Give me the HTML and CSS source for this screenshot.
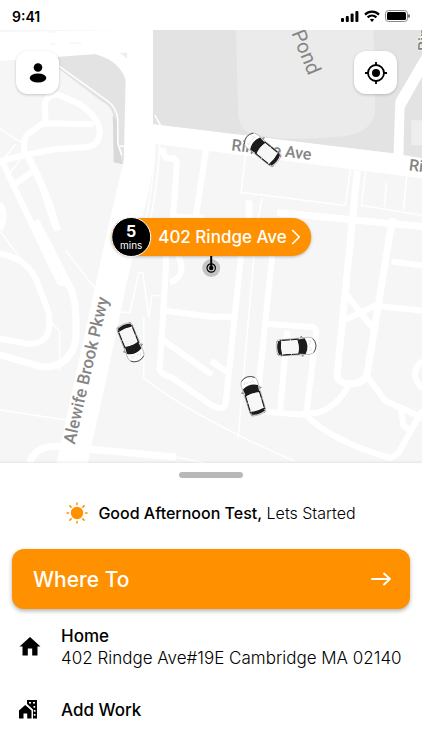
FILE: index.html
```html
<!DOCTYPE html>
<html lang="en">
<head>
<meta charset="UTF-8">
<meta name="viewport" content="width=device-width, initial-scale=1.0">
<title>Book a ride</title>
<link rel="stylesheet" href="styles.css">
</head>
<body>

<div class="app">
  <header class="status-bar">
    <span class="time">9:41</span>
    <div class="status-icons">
      <svg width="18" height="12" viewBox="0 0 18 12">
        <rect x="0" y="8" width="3" height="4" rx="1"/>
        <rect x="4.8" y="6" width="3" height="6" rx="1"/>
        <rect x="9.6" y="3.5" width="3" height="8.500" rx="1"/>
        <rect x="14.400" y="1" width="3" height="11" rx="1"/>
      </svg>
      <svg width="16" height="12" viewBox="0 0 16 12" fill="none" stroke="#000" stroke-width="2.200">
        <path d="M1 4.600C5 .6 11 .6 15 4.600M3.600 7.400c2.600-2.500 6.200-2.500 8.800 0"/>
        <path d="M5.800 9.600c1.300-1.200 3.100-1.200 4.400 0L8 12z" fill="#000" stroke="none"/>
      </svg>
      <svg width="25" height="12" viewBox="0 0 25 12">
        <rect x=".5" y=".5" width="22" height="11" rx="3" fill="none" stroke="#888"/>
        <rect x="2" y="2" width="19" height="8" rx="1.500"/>
        <path d="M23.500 4c1.500.4 1.500 3.600 0 4z"/>
      </svg>
    </div>
  </header>

  <main class="map">
    <svg class="map-canvas" viewBox="0 30 422 432" preserveAspectRatio="xMidYMid slice" role="img" aria-label="Map of nearby cars">
      <defs>
        <g id="car">
          <path d="M-8.500-13Q-8-19.500 0-19.800Q8-19.500 8.500-13L8 17Q7 19.800 0 19.800Q-7 19.800-8 17z" fill="#fff" stroke="#999" stroke-width=".6"/>
          <path d="M-7-17Q-4-19.600 0-19.800Q4-19.600 7-17" fill="none" stroke="#444" stroke-width=".8"/>
          <path d="M-8.300-7l-2 1.300 2 .7M8.300-7l2 1.300-2 .7" fill="none" stroke="#777" stroke-width=".8"/>
          <path d="M-3-14l2 .5M3-14l-2 .5M-5-12.500l1-3M5-12.500l-1-3" stroke="#ccc" stroke-width=".6"/>
          <path d="M-7.800-9Q0-13.500 7.800-9L7-1.500Q0-3.500-7-1.500z" fill="#1c1c1c"/>
          <path d="M-7.300-3v19M7.300-3v19" stroke="#222" stroke-width="1.300" stroke-dasharray="8 .6"/>
          <path d="M-6.500 14.500Q0 16 6.500 14.500L7 17.500Q0 20.500-7 17.500z" fill="#1c1c1c"/>
          <path d="M-6.500-1.500Q0-3.500 6.500-1.500V13.800Q0 15.800-6.500 13.800z" fill="#f7f7f7"/>
          <path d="M-7.500 18.300l2 1M7.500 18.300l-2 1" stroke="#c66" stroke-width=".8"/>
        </g>
      </defs>
      <rect y="30" width="422" height="432" fill="#f6f6f6"/>

      <!-- parks and pond -->
      <path d="M55 57L96 54Q126 63 127 84V164L114 162V116Q111 105 103 102L58 68z" fill="#e3e3e3"/>
      <path d="M113 115Q117 118 118 130V146L123 164 114 162z" fill="#d9d9d9"/>
      <path d="M153 30H422V160L396 154 153 124z" fill="#e3e3e3"/>
      <path d="M236 30H373L375 110Q372 130 350 135Q315 140 280 138L252 134Q240 130 238 115z" fill="#ebebeb"/>
      <path d="M411 120h11v25h-11z" fill="#eee"/>

      <!-- footpaths -->
      <g fill="none" stroke="#fff" stroke-width="1.500">
        <path d="M58 65L108 101Q116 107 118 118V143l4 12M120 146h7"/>
        <path d="M0 128l18 12 5 2M0 164l16-20M25 154L6 178M33 158q10 42 22 72"/>
        <path d="M155 115l6 11M155 144q-2 50-12 86M160 144q-3 50-12 86"/>
        <path d="M246 150l-5 42 104 13 6-43M366 166l-5 39 61 10M407 170l-4 40M386 182l-2 25"/>
        <path d="M262 197l-6 33M254 255l-16 182M242 255l-5 60M66 250l31 40M0 230l36 48M48 318l12 12v40"/>
        <path d="M128 256l-10 55 12 1 9-40h4l6 45 3-22h9M144 317v60q25 20 67 43M118 320L88 440"/>
        <path d="M211 420q45 24 83 40M0 409l80 12M123 450l52 6 30 6"/>
      </g>

      <!-- side streets -->
      <g fill="none" stroke="#fff" stroke-width="6" stroke-linejoin="round">
        <path d="M46 122L45 104Q48 93 60 95L80 104Q100 118 100 132Q99 146 85 147L55 149 24 155 0 161"/>
        <path d="M44 123l50 1M45 122L28 134q-5 5-3 18M15 184l18-13M2 160L60 282Q68 282 69 287"/>
        <path d="M27 154Q47 190 58 230" stroke-width="7"/>
        <path d="M36 220L70 286Q78 300 76 340 69 368 42 366L0 354" stroke-width="7"/>
        <path d="M0 253Q28 258 37 280L49 312Q54 344 29 343L0 338M0 203q8 12 0 26"/>
        <path d="M163 148q-1 12 11 10l3 4-4 56M206 150l-10 65M174 216l30 2M166 218v50l-6 98M166 310l45 6M164 340l48 34M178 255q10 20-8 27"/>
        <path d="M159 366q1 8 12 10l40 28q15 8 15-5l15-144M211 316h22M211 360l17 12"/>
        <path d="M249 200v18M277 212l145 14M357 170l-13 132-7 70q-2 10 13 11 14 0 17-11L390 230l3-12" stroke-width="7"/>
        <path d="M272 255l-16 155 50 4 10-82q1-6-7-6l-44-3M287 330l-7 80"/>
        <path d="M391 261l31 4M342 320q20-8 32-15l48 5M347 295l25 32M367 376l18 24 37 17M422 360q-15 12 0 28"/>
        <path d="M348 385q-12 22-32 27h-12q24 27 86 45l8-5 24-43M400 405l3 20 10 6"/>
        <path d="M30 462q6-20 36-16l110 10" stroke-width="7"/>
      </g>

      <!-- main roads -->
      <g fill="#fff">
        <path d="M0 32L127 30V84Q122 61 95 54L0 61z"/>
        <path d="M127 30H153V128Q157 150 149 190L127 282 108 372 88 462H57L108 228 124 160z"/>
        <path d="M153 124L211 131 393 153 422 158V178L211 151 152 143z"/>
        <path d="M422 54L395 100 393 156H403L404 108 422 76z"/>
      </g>
      <path d="M121 53h6v5zM50 32h6M50 44h6M70 43h12" fill="#eee" stroke="#eee" stroke-width=".8"/>

      <g class="street">
        <text transform="translate(231 150) rotate(7)">Rindge Ave</text>
        <text transform="translate(408 170) rotate(7)">Rindge Ave</text>
        <text class="parkway" transform="translate(75 444) rotate(-77)">Alewife Brook Pkwy</text>
        <text class="water" transform="translate(291 33) rotate(68)">Pond</text>
        <text transform="translate(429 51) rotate(-90)">Rin</text>
      </g>

      <use href="#car" transform="translate(262 149) rotate(-51)"/>
      <use href="#car" transform="translate(131 342) rotate(158)"/>
      <use href="#car" transform="translate(296 346) rotate(86)"/>
      <use href="#car" transform="translate(253 395) rotate(-17)"/>
    </svg>

    <nav class="map-controls">
      <button type="button" class="icon-button" aria-label="Profile">
        <svg width="18" height="20" viewBox="0 0 18 20"><circle cx="9" cy="4.500" r="4.300"/><ellipse cx="9" cy="15" rx="8.300" ry="4.500"/></svg>
      </button>
      <button type="button" class="icon-button" aria-label="My location">
        <svg width="24" height="24" viewBox="0 0 24 24" fill="none" stroke="#000" stroke-width="1.800">
          <circle cx="12" cy="12" r="8"/><circle cx="12" cy="12" r="4" fill="#000" stroke="none"/>
          <path d="M12 1v3M12 20v3M1 12h3M20 12h3"/>
        </svg>
      </button>
    </nav>

    <div class="pickup">
      <button type="button" class="pickup-label">
        <span class="eta"><strong>5</strong><span>mins</span></span>
        <span>402 Rindge Ave</span>
        <svg width="9" height="16" viewBox="0 0 9 16" fill="none" stroke="#fff" stroke-width="1.600"><path d="M1 1l7 7-7 7"/></svg>
      </button>
      <svg class="pickup-pin" width="20" height="24" viewBox="0 0 20 24">
        <circle cx="10" cy="12" r="9" fill="#c4c4c4"/>
        <circle cx="10" cy="12" r="4.200" fill="none" stroke="#000" stroke-width="1.200"/>
        <circle cx="10" cy="12" r="2.200"/>
        <path d="M10 0v11" stroke="#000" stroke-width="2"/>
      </svg>
    </div>
  </main>

  <section class="sheet">
    <div class="handle"></div>
    <p class="greeting">
      <svg width="22" height="22" viewBox="0 0 22 22" stroke="#ff9100" stroke-width="1.500" stroke-linecap="round">
        <circle cx="11" cy="11" r="6.200" fill="#ff9100" stroke="none"/>
        <path d="M11 1v1.500M11 19.500V21M1 11h1.500M19.500 11H21M3.900 3.900l1.200 1.200M16.900 16.900l1.200 1.200M3.900 18.100l1.200-1.200M16.900 5.100l1.200-1.200"/>
      </svg>
      <span><strong>Good Afternoon Test,</strong> Lets Started</span>
    </p>

    <button type="button" class="where-to">
      <span>Where To</span>
      <svg width="20" height="14" viewBox="0 0 20 14" fill="none" stroke="#fff" stroke-width="1.800" stroke-linecap="round" stroke-linejoin="round"><path d="M1 7h18M13 1.500L19 7l-6 5.500"/></svg>
    </button>

    <ul class="places">
      <li>
        <a href="#home" class="place">
          <svg width="22" height="20" viewBox="0 0 22 20"><path d="M11 0L.5 9.500H3.500V18.500H8.800V11.500H13.200V18.500H18.500V9.500H21.500z"/></svg>
          <span class="place-text"><strong>Home</strong><span>402 Rindge Ave#19E Cambridge MA 02140</span></span>
        </a>
      </li>
      <li>
        <a href="#work" class="place">
          <svg width="22" height="20" viewBox="0 0 22 20">
            <path d="M0 10.500L6.200 5l6.300 5.500V18.500H8.200V13.500H4.500V18.500H0z"/>
            <path fill-rule="evenodd" d="M8 0H18V18.500H14V9.500L8 4zM10 2v1.500h2V2zM14 2v1.500h2v-1.500zM14.500 6v1.700h1.700v-1.700zM14.800 10v1.700h1.700v-1.700zM14.800 14v1.700h1.700v-1.700z"/>
          </svg>
          <span class="place-text"><strong>Add Work</strong></span>
        </a>
      </li>
    </ul>
  </section>
</div>

</body>
</html>
```

FILE: styles.css
```css
* {
  box-sizing: border-box;
}

body {
  margin: 0;
  font-family: Inter, "Liberation Sans", sans-serif;
  background: #fff;
  color: #000;
}

button {
  border: none;
  font-family: inherit;
  cursor: pointer;
}

strong {
  font-weight: 500;
}

.app {
  display: flex;
  flex-direction: column;
  min-height: 100vh;
}

.status-bar {
  display: flex;
  justify-content: space-between;
  align-items: center;
  height: 30px;
  padding: 2px 12px 0;
}

.time {
  font-size: 14px;
  font-weight: 600;
}

.status-icons {
  display: flex;
  align-items: center;
  gap: 5px;
}

.map {
  position: relative;
  flex: 1;
  min-height: 360px;
  overflow: hidden;
}

.map-canvas {
  position: absolute;
  inset: 0;
  width: 100%;
  height: 100%;
}

.street {
  font-family: Roboto, sans-serif;
  font-size: 16px;
  font-weight: 500;
  fill: #858585;
  stroke: #fff;
  stroke-width: 1px;
  paint-order: stroke;
}

.parkway {
  font-size: 17px;
}

.water {
  font-size: 20px;
  font-weight: 400;
  stroke: none;
}

.map-controls {
  position: relative;
  display: flex;
  justify-content: space-between;
  padding: 21px 25px 0 16px;
}

.icon-button {
  display: flex;
  align-items: center;
  justify-content: center;
  width: 43px;
  height: 43px;
  padding: 0;
  border-radius: 12px;
  background: #fff;
  box-shadow: 0 1px 3px rgba(0,0,0,0.2);
}

.pickup {
  position: absolute;
  top: 188px;
  left: 50%;
  display: flex;
  flex-direction: column;
  align-items: center;
  transform: translateX(-50%);
}

.pickup-label {
  display: flex;
  align-items: center;
  gap: 4px;
  height: 38px;
  padding: 0 11px 0 0;
  border-radius: 19px;
  background: #ff9100;
  color: #fff;
  font-size: 17px;
  font-weight: 500;
  white-space: nowrap;
  box-shadow: 0 1px 3px rgba(0,0,0,0.25);
}

.eta {
  display: flex;
  flex-direction: column;
  align-items: center;
  justify-content: center;
  width: 40px;
  height: 40px;
  margin-right: 3px;
  border: 1px solid #fff;
  border-radius: 50%;
  background: #000;
  font-size: 10px;
  font-weight: 400;
  line-height: 13px;
}

.eta strong {
  font-size: 16px;
  font-weight: 700;
  line-height: 16px;
}

.sheet {
  position: relative;
  padding: 9px 12px 29px;
  background: #fff;
  box-shadow: 0 -1px 2px rgba(0,0,0,0.08);
}

.handle {
  width: 64px;
  height: 6px;
  margin: 0 auto;
  border-radius: 3px;
  background: #b8b8b8;
}

.greeting {
  display: flex;
  align-items: center;
  justify-content: center;
  gap: 10px;
  margin: 23px 0 24px;
  font-size: 16px;
  font-weight: 300;
  line-height: 24px;
}

.where-to {
  display: flex;
  align-items: center;
  justify-content: space-between;
  width: 100%;
  height: 60px;
  padding: 0 19px 0 21px;
  border-radius: 12px;
  background: #ff9100;
  color: #fff;
  font-size: 21px;
  font-weight: 500;
  box-shadow: 0 2px 4px rgba(0,0,0,0.3);
}

.places {
  display: flex;
  flex-direction: column;
  gap: 30px;
  margin: 16px 0 0;
  padding: 0;
  list-style: none;
}

.place {
  display: flex;
  align-items: center;
  gap: 20px;
  padding-left: 7px;
  color: #000;
  text-decoration: none;
}

.place-text {
  display: flex;
  flex-direction: column;
  font-size: 17px;
  font-weight: 300;
  line-height: 22px;
  white-space: nowrap;
}
```
